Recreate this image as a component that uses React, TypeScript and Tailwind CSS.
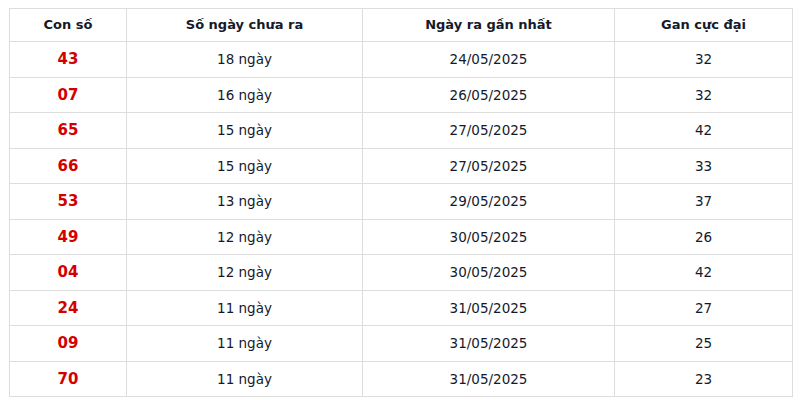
const rows = [
  ["43", "18 ngày", "24/05/2025", "32"],
  ["07", "16 ngày", "26/05/2025", "32"],
  ["65", "15 ngày", "27/05/2025", "42"],
  ["66", "15 ngày", "27/05/2025", "33"],
  ["53", "13 ngày", "29/05/2025", "37"],
  ["49", "12 ngày", "30/05/2025", "26"],
  ["04", "12 ngày", "30/05/2025", "42"],
  ["24", "11 ngày", "31/05/2025", "27"],
  ["09", "11 ngày", "31/05/2025", "25"],
  ["70", "11 ngày", "31/05/2025", "23"],
];

export default function App() {
  return (
    <div className="h-[400px] w-[800px] bg-white pl-[9px] pt-[8px] font-['DejaVu_Sans',sans-serif] text-[#141a2b]">
      <table className="w-[784px] table-fixed border-collapse text-center text-[13.5px]">
        <colgroup>
          <col className="w-[117px]" />
          <col className="w-[236px]" />
          <col className="w-[252px]" />
          <col />
        </colgroup>
        <thead>
          <tr className="h-[33px]">
            {["Con số", "Số ngày chưa ra", "Ngày ra gần nhất", "Gan cực đại"].map((h) => (
              <th key={h} className="border border-[#dddddd] p-0 text-[13px] font-bold">
                {h}
              </th>
            ))}
          </tr>
        </thead>
        <tbody>
          {rows.map(([num, days, date, max]) => (
            <tr key={num} className="h-[35.5px]">
              <td className="border border-[#dddddd] p-0 text-[15px] font-bold text-[#d40000]">{num}</td>
              <td className="border border-[#dddddd] p-0">{days}</td>
              <td className="border border-[#dddddd] p-0">{date}</td>
              <td className="border border-[#dddddd] p-0">{max}</td>
            </tr>
          ))}
        </tbody>
      </table>
    </div>
  );
}
